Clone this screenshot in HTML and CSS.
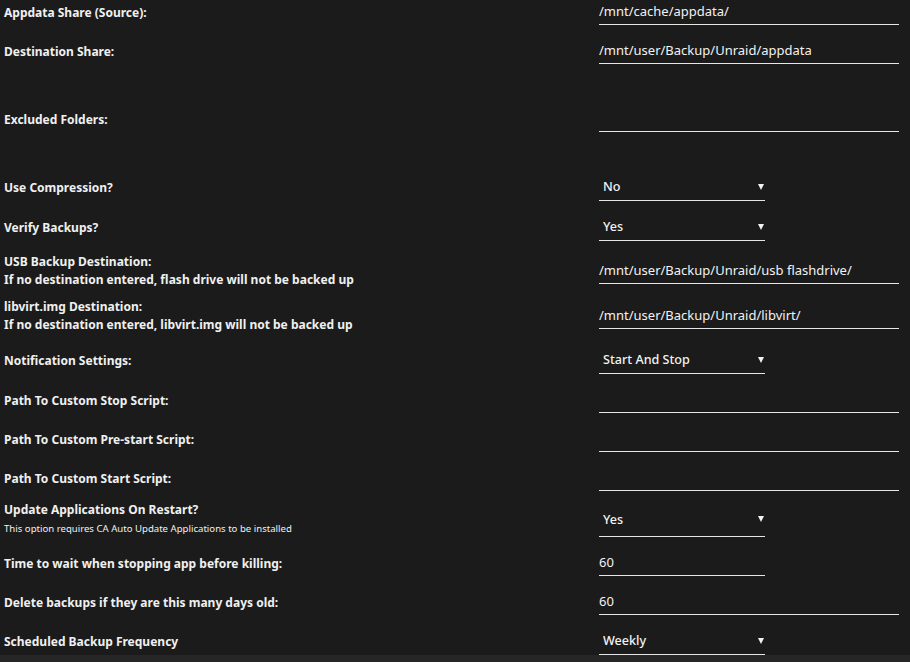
FILE: index.html
```html
<!DOCTYPE html>
<html lang="en">

<head>
    <meta charset="UTF-8">
    <meta name="viewport" content="width=device-width, initial-scale=1.0">
    <title>Backup Settings</title>
    <link rel="stylesheet" href="styles.css">
</head>

<body>
    <form class="settings">
        <div class="row">
            <label class="label">Appdata Share (Source):</label>
            <div class="field"><input class="text wide" value="/mnt/cache/appdata/"></div>
        </div>
        <div class="row">
            <label class="label">Destination Share:</label>
            <div class="field"><input class="text wide" value="/mnt/user/Backup/Unraid/appdata"></div>
        </div>
        <div class="row row-tall">
            <label class="label">Excluded Folders:</label>
            <div class="field"><input class="text wide" value=""></div>
        </div>
        <div class="row">
            <label class="label">Use Compression?</label>
            <div class="field select-wrap"><select class="select"><option>No</option><option>Yes</option></select></div>
        </div>
        <div class="row">
            <label class="label">Verify Backups?</label>
            <div class="field select-wrap"><select class="select"><option>Yes</option><option>No</option></select></div>
        </div>
        <div class="row row-usb">
            <label class="label">USB Backup Destination:<br>If no destination entered, flash drive will not be backed up</label>
            <div class="field"><input class="text wide" value="/mnt/user/Backup/Unraid/usb flashdrive/"></div>
        </div>
        <div class="row row-libvirt">
            <label class="label">libvirt.img Destination:<br>If no destination entered, libvirt.img will not be backed up</label>
            <div class="field"><input class="text wide" value="/mnt/user/Backup/Unraid/libvirt/"></div>
        </div>
        <div class="row">
            <label class="label">Notification Settings:</label>
            <div class="field select-wrap"><select class="select"><option>Start And Stop</option><option>Errors</option></select></div>
        </div>
        <div class="row">
            <label class="label">Path To Custom Stop Script:</label>
            <div class="field"><input class="text wide" value=""></div>
        </div>
        <div class="row">
            <label class="label">Path To Custom Pre-start Script:</label>
            <div class="field"><input class="text wide" value=""></div>
        </div>
        <div class="row">
            <label class="label">Path To Custom Start Script:</label>
            <div class="field"><input class="text wide" value=""></div>
        </div>
        <div class="row row-update">
            <label class="label">Update Applications On Restart?<br><span class="note">This option requires CA Auto Update Applications to be installed</span></label>
            <div class="field select-wrap select-wrap-high"><select class="select select-high"><option>Yes</option><option>No</option></select></div>
        </div>
        <div class="row">
            <label class="label">Time to wait when stopping app before killing:</label>
            <div class="field"><input class="text narrow" value="60"></div>
        </div>
        <div class="row">
            <label class="label">Delete backups if they are this many days old:</label>
            <div class="field"><input class="text wide" value="60"></div>
        </div>
        <div class="row">
            <label class="label">Scheduled Backup Frequency</label>
            <div class="field select-wrap"><select class="select"><option>Weekly</option><option>Daily</option><option>Monthly</option></select></div>
        </div>
    </form>
    <div class="footer"></div>
</body>

</html>
```

FILE: styles.css
```css
body {
    background-color: #1b1b1b;
    margin: 0;
    font-family: 'Noto Sans', 'Open Sans', sans-serif;
    color: #f2f2f2;
    overflow: hidden;
    height: 100vh;
}

.row {
    display: grid;
    grid-template-columns: 599px 1fr;
    align-items: center;
    margin-bottom: 14px;
}

.row:last-child {
    margin-bottom: 0;
}

.row-tall {
    padding: 29px 0;
}

.row-usb {
    margin-top: -2px;
}

.row-libvirt {
    margin-top: -5px;
}

.row-update {
    margin-top: -4px;
    align-items: end;
}

.label {
    padding-left: 4px;
    font-size: 12px;
    font-weight: bold;
    line-height: 18px;
    color: #f0f0f0;
}

.note {
    font-size: 9.6px;
    font-weight: normal;
    line-height: 16px;
}

.field {
    position: relative;
}

.text,
.select {
    display: block;
    font-family: inherit;
    font-size: 13px;
    color: #f2f2f2;
    background: transparent;
    border: none;
    border-bottom: 1px solid #e6e6e6;
    outline: none;
    box-sizing: border-box;
    margin: 0;
    padding: 0;
    border-radius: 0;
}

.text {
    height: 25px;
    padding-bottom: 2px;
}

.wide {
    width: 300px;
}

.narrow {
    width: 166px;
}

.select {
    appearance: none;
    -webkit-appearance: none;
    width: 166px;
    height: 26px;
    padding-left: 4px;
    padding-bottom: 2px;
    font-size: 12.6px;
    font-weight: 500;
}

.select-high {
    padding-bottom: 8px;
}

.select-wrap::after {
    content: "";
    position: absolute;
    left: 159px;
    top: 9px;
    border-left: 3px solid transparent;
    border-right: 3px solid transparent;
    border-top: 6px solid #f2f2f2;
    pointer-events: none;
}

.select-wrap-high::after {
    top: 5px;
}

.footer {
    background-color: #262626;
    height: 8px;
}
```
